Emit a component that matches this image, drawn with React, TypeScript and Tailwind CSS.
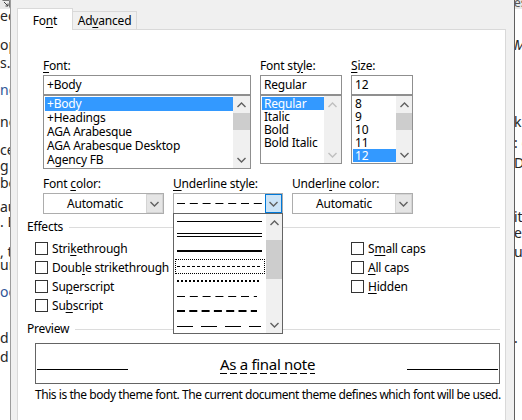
import React from 'react';

const FONT = "font-['Segoe_UI','Noto_Sans',sans-serif]";

// underlined access-key letter
const U: React.FC<{ children: React.ReactNode }> = ({ children }) => (
  <span className="underline underline-offset-[2px]">{children}</span>
);

const Chevron: React.FC<{ up?: boolean; color?: string }> = ({ up, color = '#606060' }) => (
  <svg width="9" height="6" viewBox="0 0 9 6">
    <polyline
      points={up ? '0.5,5 4.5,1 8.5,5' : '0.5,1 4.5,5 8.5,1'}
      fill="none"
      stroke={color}
      strokeWidth="1.4"
    />
  </svg>
);

const Scrollbar: React.FC<{ disabled?: boolean; thumb?: boolean; width: string }> = ({
  disabled,
  thumb,
  width
}) => {
  const c = disabled ? '#bfbfbf' : '#606060';
  return (
    <div className={`flex h-full ${width} shrink-0 flex-col bg-[#f0f0f0]`}>
      <div className="flex h-[17px] items-center justify-center">
        <Chevron up color={c} />
      </div>
      {thumb && <div className="h-[17px] bg-[#cdcdcd]" />}
      <div className="flex-1" />
      <div className="flex h-[17px] items-center justify-center">
        <Chevron color={c} />
      </div>
    </div>
  );
};

const ListBox: React.FC<{
  items: string[];
  selected: number;
  rowH: string;
  height: string;
  disabled?: boolean;
  thumb?: boolean;
  sbW: string;
}> = ({ items, selected, rowH, height, disabled, thumb, sbW }) => (
  <div className={`flex ${height} border border-[#8f8f8f] bg-white`}>
    <div className="flex-1 pl-[1px] pt-[1px]">
      {items.map((it, i) => (
        <div
          key={it}
          className={`${rowH} flex items-center whitespace-nowrap pl-[2px] ${
            i === selected ? 'bg-[#3399ff] text-white' : 'text-[#000]'
          }`}
        >
          {it}
        </div>
      ))}
    </div>
    <Scrollbar disabled={disabled} thumb={thumb} width={sbW} />
  </div>
);

const Combo: React.FC<{ width: string; focused?: boolean; children: React.ReactNode }> = ({
  width,
  focused,
  children
}) => (
  <div className={`flex h-[21px] ${width} border border-[#adadad] bg-white`}>
    <div className="flex flex-1 items-center justify-center">{children}</div>
    <div
      className={`flex w-[17px] items-center justify-center border ${
        focused ? 'border-[#0078d7] bg-[#cce4f7]' : 'border-[#d4d4d4] bg-[#e5e5e5]'
      }`}
    >
      <Chevron />
    </div>
  </div>
);

// one underline sample, 7px tall
const Line: React.FC<{ dash?: string; w?: number; sw?: number; y?: number; double?: boolean }> = ({
  dash,
  w = 85,
  sw = 1,
  y = 3.5,
  double
}) => (
  <svg width={w} height="7" viewBox={`0 0 ${w} 7`} className="block">
    {double ? (
      <>
        <line x1="0" y1="0.5" x2={w} y2="0.5" stroke="#000" strokeWidth="1" />
        <line x1="0" y1="3.5" x2={w} y2="3.5" stroke="#000" strokeWidth="1" />
      </>
    ) : (
      <line x1="0" y1={y} x2={w} y2={y} stroke="#000" strokeWidth={sw} strokeDasharray={dash} />
    )}
  </svg>
);

const underlineItems = [
  <Line key="1" />,
  <Line key="2" double />,
  <Line key="3" sw={2} y={3} />,
  <Line key="4" dash="3 2" />,
  <Line key="5" dash="2 2" sw={2} y={3} w={82} />,
  <Line key="6" dash="8 4.8" w={80} />,
  <Line key="7" dash="8 4.3" sw={2} y={3} w={80} />,
  <Line key="8" dash="16 8" w={84} />
];

const Check: React.FC<{ children: React.ReactNode }> = ({ children }) => (
  <div className="flex h-[19px] items-center">
    <div className="h-[13px] w-[13px] border border-[#333333] bg-white" />
    <span className="ml-[4px]">{children}</span>
  </div>
);

const GroupHead: React.FC<{ title: string }> = ({ title }) => (
  <div className="flex h-[16px] items-center pl-[9px] pr-[5px]">
    <span>{title}</span>
    <div className="ml-[6px] h-[1px] flex-1 bg-[#dcdcdc]" />
  </div>
);

const leftFrags: { t: string; cls: string }[] = [
  { t: 'ec', cls: 'mt-[0px]' },
  { t: 'opt', cls: 'mt-[16px]' },
  { t: 's...', cls: 'mt-[5px]' },
  { t: 'ng', cls: 'mt-[14px] text-[#2f5597]' },
  { t: 'nc', cls: 'mt-[19px]' },
  { t: 'ce', cls: 'mt-[15px]' },
  { t: 'g fo', cls: 'mt-[3px]' },
  { t: 'be', cls: 'mt-[4px]' },
  { t: 'au', cls: 'mt-[11px]' },
  { t: '. E', cls: 'mt-[2px]' },
  { t: ', t', cls: 'mt-[17px]' },
  { t: 'ur', cls: 'mt-[0px]' },
  { t: 'oo', cls: 'mt-[14px] text-[#2f5597]' },
  { t: 'd', cls: 'mt-[33px]' },
  { t: 'd', cls: 'mt-[6px]' }
];

const rightFrags: { t: string; cls: string }[] = [
  { t: 'Mo', cls: 'mt-[29px] italic' },
  { t: 'k.', cls: 'mt-[64px]' },
  { t: ': c', cls: 'mt-[8px]' },
  { t: 'Di', cls: 'mt-[7px]' },
  { t: 'it', cls: 'mt-[41px]' },
  { t: 'e', cls: 'mt-[3px]' },
  { t: 'u', cls: 'mt-[6px]' },
  { t: '.', cls: 'mt-[73px]' }
];

export default function App() {
  return (
    <div className={`flex h-[420px] w-[522px] overflow-hidden bg-white text-[12px] leading-[16px] text-black ${FONT}`}>
      {/* document behind, left */}
      <div className="flex w-[10px] shrink-0 flex-col overflow-hidden text-[14px] leading-[13px] text-[#262626]">
        <div className="flex h-[9px] items-start bg-[#e9e9e9] pl-[2px]">
          <svg width="8" height="8" viewBox="0 0 8 8">
            <path d="M0.5 0.5H7.5V7.5" fill="none" stroke="#777" />
            <path d="M2 2L6 6M6 3.5V6H3.5" fill="none" stroke="#444" />
          </svg>
        </div>
        {leftFrags.map((f, i) => (
          <div key={i} className={`h-[13px] whitespace-nowrap ${f.cls}`}>
            {f.t}
          </div>
        ))}
      </div>

      {/* dialog */}
      <div className="flex w-[505px] shrink-0 flex-col border-x border-l-[#9c9c9c] border-r-[#5f5f5f] bg-[#f0f0f0] pl-[6px] pr-[8px] pt-[8px] tracking-[-0.2px]">
        {/* tabs */}
        <div className="flex h-[21px] items-start">
          <div className="relative z-10 h-[22px] w-[56px] border-x border-t border-[#d9d9d9] bg-white pt-[4px] text-center">
            Fo<U>n</U>t
          </div>
          <div className="mt-[3px] h-[18px] w-[64px] border-r border-t border-[#d9d9d9] bg-[#f0f0f0] pt-[1px] text-center">
            Ad<U>v</U>anced
          </div>
        </div>

        {/* panel */}
        <div className="flex flex-1 flex-col border-x border-t border-[#d9d9d9] bg-white pt-[28px]">
          {/* font / style / size */}
          <div className="flex items-start gap-[9px] pl-[25px]">
            <div className="w-[208px]">
              <div className="mb-[1px] h-[16px]">
                <U>F</U>ont:
              </div>
              <div className="flex h-[20px] items-center border border-[#8f8f8f] pl-[3px]">+Body</div>
              <ListBox
                items={['+Body', '+Headings', 'AGA Arabesque', 'AGA Arabesque Desktop', 'Agency FB']}
                selected={0}
                rowH="h-[14px] leading-[14px]"
                height="h-[74px]"
                thumb
                sbW="w-[17px]"
              />
            </div>
            <div className="w-[82px]">
              <div className="mb-[1px] h-[16px]">
                Font st<U>y</U>le:
              </div>
              <div className="flex h-[20px] items-center border border-[#8f8f8f] pl-[3px]">Regular</div>
              <ListBox
                items={['Regular', 'Italic', 'Bold', 'Bold Italic']}
                selected={0}
                rowH="h-[13px] leading-[13px]"
                height="h-[69px]"
                disabled
                sbW="w-[17px]"
              />
            </div>
            <div className="w-[62px]">
              <div className="mb-[1px] h-[16px]">
                <U>S</U>ize:
              </div>
              <div className="flex h-[20px] items-center border border-[#8f8f8f] pl-[3px]">12</div>
              <ListBox
                items={['8', '9', '10', '11', '12']}
                selected={4}
                rowH="h-[13px] leading-[13px]"
                height="h-[69px]"
                thumb
                sbW="w-[16px]"
              />
            </div>
          </div>

          {/* colour / underline row */}
          <div className="mt-[7px] flex items-start gap-[9px] pl-[25px]">
            <div>
              <div className="mb-[1px] h-[16px]">
                Font <U>c</U>olor:
              </div>
              <Combo width="w-[121px]">Automatic</Combo>
            </div>
            <div className="relative z-20">
              <div className="mb-[1px] h-[16px]">
                <U>U</U>nderline style:
              </div>
              <Combo width="w-[110px]" focused>
                <div className="w-full pl-[3px]">
                  <Line dash="8 4.8" />
                </div>
              </Combo>
              {/* open dropdown */}
              <div className="absolute left-0 top-[37px] flex h-[121px] w-[110px] border border-[#646464] bg-white">
                <div className="flex-1">
                  {underlineItems.map((l, i) => (
                    <div key={i} className="flex h-[15px] px-[1px]">
                      <div
                        className={`flex h-[15px] flex-1 items-center pl-[1px] ${
                          i === 3 ? 'border border-dotted border-black' : 'border border-transparent'
                        }`}
                      >
                        {l}
                      </div>
                    </div>
                  ))}
                </div>
                <div className="flex w-[16px] flex-col bg-[#f0f0f0]">
                  <div className="flex h-[17px] items-center justify-center">
                    <Chevron up />
                  </div>
                  <div className="mt-[9px] h-[39px] bg-[#cdcdcd]" />
                  <div className="flex-1" />
                  <div className="flex h-[17px] items-center justify-center">
                    <Chevron />
                  </div>
                </div>
              </div>
            </div>
            <div>
              <div className="mb-[1px] h-[16px]">
                Underl<U>i</U>ne color:
              </div>
              <Combo width="w-[121px]">Automatic</Combo>
            </div>
          </div>

          {/* effects */}
          <div className="mt-[5px]">
            <GroupHead title="Effects" />
          </div>
          <div className="mt-[4px] flex pl-[17px]">
            <div className="w-[316px]">
              <Check>
                Stri<U>k</U>ethrough
              </Check>
              <Check>
                Doub<U>l</U>e strikethrough
              </Check>
              <Check>
                Su<U>p</U>erscript
              </Check>
              <Check>
                Su<U>b</U>script
              </Check>
            </div>
            <div>
              <Check>
                S<U>m</U>all caps
              </Check>
              <Check>
                <U>A</U>ll caps
              </Check>
              <Check>
                <U>H</U>idden
              </Check>
            </div>
          </div>

          {/* preview */}
          <div className="mt-[6px]">
            <GroupHead title="Preview" />
          </div>
          <div className="ml-[17px] mt-[6px] flex h-[41px] w-[465px] items-start justify-between border border-[#646464] px-[1px]">
            <div className="mt-[25px] h-[1px] w-[91px] bg-black" />
            <div className="mt-[10px] flex flex-col text-[15px] leading-[20px] tracking-[-0.3px]">
              <span>As a final note</span>
              <div className="-mt-[1px] h-[1px] w-full bg-[repeating-linear-gradient(90deg,#000_0_7px,transparent_7px_10px)]" />
            </div>
            <div className="mt-[25px] h-[1px] w-[91px] bg-black" />
          </div>
          <div className="mt-[3px] whitespace-nowrap pl-[17px] tracking-[-0.45px]">
            This is the body theme font. The current document theme defines which font will be used.
          </div>
        </div>
      </div>

      {/* document behind, right */}
      <div className="flex w-[7px] shrink-0 flex-col overflow-hidden text-[14px] leading-[13px] text-[#262626]">
        <div className="flex h-[9px] items-end overflow-hidden bg-[#e9e9e9] text-[12px] leading-[12px] text-[#555]">
          <span className="-ml-[1px]">es</span>
        </div>
        {rightFrags.map((f, i) => (
          <div key={i} className={`-ml-[1px] h-[13px] whitespace-nowrap ${f.cls}`}>
            {f.t}
          </div>
        ))}
      </div>
    </div>
  );
}
